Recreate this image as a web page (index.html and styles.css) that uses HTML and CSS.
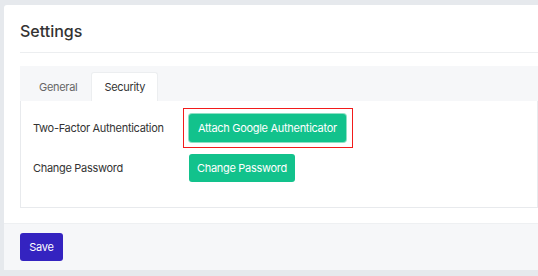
FILE: index.html
```html
<!DOCTYPE html>
<html lang="en">
<head>
    <meta charset="UTF-8">
    <title>Settings</title>
    <link rel="stylesheet" href="styles.css">
</head>
<body>
    <div class="card">
        <div class="card-header">
            <h1 class="card-title">Settings</h1>
        </div>

        <div class="card-body">
            <div class="tab-bar">
                <button class="tab">General</button>
                <button class="tab active">Security</button>
            </div>

            <div class="tab-panel">
                <div class="setting-row">
                    <div class="setting-label">Two-Factor Authentication</div>
                    <button class="btn btn-green highlighted">Attach Google Authenticator</button>
                </div>
                <div class="setting-row">
                    <div class="setting-label">Change Password</div>
                    <button class="btn btn-green">Change Password</button>
                </div>
            </div>
        </div>

        <div class="card-footer">
            <button class="btn btn-primary">Save</button>
        </div>
    </div>
</body>
</html>
```

FILE: styles.css
```css
* {
    margin: 0;
    padding: 0;
    box-sizing: border-box;
    font-family: Inter, 'Noto Sans', sans-serif;
    letter-spacing: -0.3px;
}

body {
    background-color: #e6e9ed;
    color: #333;
    padding: 5px 0 6px 4px;
    height: 276px;
    overflow: hidden;
}

.card {
    background-color: #fff;
    border-top-left-radius: 3px;
    height: 265px;
    display: flex;
    flex-direction: column;
}

.card-header {
    margin-left: 16px;
    height: 48px;
    border-bottom: 1px solid #eceef0;
    display: flex;
    align-items: center;
}

.card-title {
    font-size: 16px;
    font-weight: 500;
    letter-spacing: 0;
    color: #333;
    margin-top: 4px;
}

.card-body {
    flex: 1;
    padding: 13px 0 0 16px;
}

.tab-bar {
    display: flex;
    gap: 1px;
    background-color: #f6f7f9;
    padding: 6px 0 0 6px;
    height: 35px;
}

.tab {
    padding: 0 12px;
    height: 29px;
    border: 1px solid transparent;
    border-bottom: none;
    border-radius: 3px 3px 0 0;
    background: none;
    font-size: 11px;
    color: #666;
    cursor: pointer;
}

.tab.active {
    background-color: #fff;
    border-color: #eceef0;
    color: #333;
}

.tab-panel {
    border: 1px solid #e8eaed;
    border-top: none;
    padding: 13px 12px 25px;
    display: flex;
    flex-direction: column;
    gap: 12px;
}

.setting-row {
    display: flex;
    align-items: center;
}

.setting-label {
    width: 156px;
    font-size: 11px;
    color: #333;
}

.btn {
    height: 28px;
    padding: 0 8px;
    border: none;
    border-radius: 3px;
    font-size: 11px;
    color: #fff;
    cursor: pointer;
}

.btn-green {
    background-color: #12c28c;
}

.btn-green.highlighted {
    position: relative;
    padding: 0 9px;
    box-shadow: 0 0 0 1px #8fe0c4;
}

.btn-green.highlighted::after {
    content: "";
    position: absolute;
    top: -6px;
    left: -6px;
    right: -7px;
    bottom: -6px;
    border: 1px solid #f21b1b;
}

.btn-primary {
    width: 43px;
    padding: 0;
    background-color: #3423c0;
}

.card-footer {
    border-top: 1px solid #eef0f2;
    background-color: #f6f7f9;
    padding: 9px 16px 9px;
}
```
